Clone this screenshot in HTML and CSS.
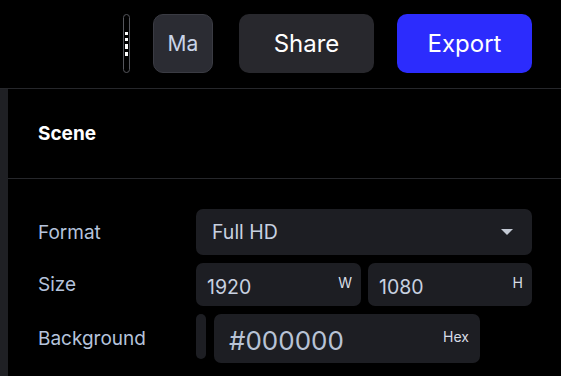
FILE: index.html
```html
<!DOCTYPE html>
<html>
<head>
<meta charset="utf-8">
<link rel="stylesheet" href="styles.css">
</head>
<body>
<header class="topbar">
  <div class="thin-btn"><span class="mark m1"></span><span class="mark m2"></span><span class="mark m3"></span><span class="mark m4"></span></div>
  <button class="btn btn-user">Ma</button>
  <button class="btn btn-share">Share</button>
  <button class="btn btn-export">Export</button>
</header>
<div class="main">
  <div class="rail"></div>
  <section class="panel">
    <div class="panel-head">Scene</div>
    <div class="form">
      <div class="label">Format</div>
      <div class="field select">
        <span>Full HD</span>
        <svg class="caret" width="12" height="6" viewBox="0 0 12 6"><path d="M0 0h12L6 6z" fill="#c3c9d4"/></svg>
      </div>
      <div class="label">Size</div>
      <div class="pair">
        <div class="field num"><span>1920</span><span class="unit">W</span></div>
        <div class="field num"><span>1080</span><span class="unit">H</span></div>
      </div>
      <div class="label">Background</div>
      <div class="bg-row">
        <div class="swatch"></div>
        <div class="field hex"><span class="hexval">#000000</span><span class="unit hexunit">Hex</span></div>
      </div>
    </div>
  </section>
</div>
</body>
</html>
```
FILE: styles.css
```css
* { box-sizing: border-box; }
html, body { margin: 0; padding: 0; background: #000; }
body { font-family: Inter, "Liberation Sans", sans-serif; color: #fff; width: 561px; height: 376px; overflow: hidden; }

.topbar {
  height: 89px;
  border-bottom: 1px solid #26272b;
  display: flex;
  justify-content: flex-end;
  align-items: flex-start;
  padding: 14px 29px 0 0;
}
.thin-btn {
  width: 7px;
  height: 59px;
  margin-right: 23px;
  border: 1px solid #55565c;
  border-radius: 4px;
  display: flex;
  flex-direction: column;
  align-items: center;
  padding-top: 17px;
  gap: 3px;
}
.mark { display: block; width: 3px; background: #fff; }
.m1 { height: 3px; }
.m2 { height: 3px; }
.m3 { height: 5px; }
.m4 { height: 4px; }

.btn {
  height: 59px;
  border: none;
  border-radius: 10px;
  font-family: Inter, "Liberation Sans", sans-serif;
  font-size: 24px;
  color: #fff;
  padding: 0;
}
.btn-user {
  width: 60px;
  background: #2b2c33;
  border: 1px solid #3a3b43;
  color: #c9d4e8;
  font-size: 21px;
  margin-right: 26px;
}
.btn-share { width: 135px; background: #28282d; margin-right: 23px; }
.btn-export { width: 135px; background: #2c2cfd; }

.main { display: flex; height: 287px; }
.rail { width: 8px; background: #1f2024; }
.panel { flex: 1; }
.panel-head {
  height: 90px;
  border-bottom: 1px solid #26272b;
  padding-left: 30px;
  display: flex;
  align-items: center;
  font-weight: 700;
  font-size: 19px;
}
.form {
  display: grid;
  grid-template-columns: 158px 336px;
  grid-template-rows: 46px 43px 49px;
  row-gap: 8px;
  padding: 30px 0 0 30px;
}
.label {
  font-size: 19px;
  color: #b5c3dc;
  display: flex;
  align-items: center;
}
.field {
  background: #1d1e23;
  border-radius: 7px;
  display: flex;
  align-items: center;
  justify-content: space-between;
  color: #c8d1e0;
}
.select { padding: 0 19px 0 16px; font-size: 19.5px; }
.pair { display: grid; grid-template-columns: 165px 164px; column-gap: 7px; }
.num { padding: 0 9px 0 11px; font-size: 19.5px; }
.num span:first-child { padding-top: 4px; }
.unit { font-size: 14px; color: #d8dde6; align-self: flex-start; padding-top: 11px; }
.bg-row { display: flex; gap: 8px; align-items: flex-start; }
.swatch { width: 10px; height: 45px; background: #1d1e23; border-radius: 5px; }
.hex { width: 266px; height: 49px; padding: 0 11px 0 15px; }
.hexval { font-size: 26px; color: #b8c3d6; padding-top: 3px; }
.hexunit { padding-top: 14px; font-size: 14px; }
```
